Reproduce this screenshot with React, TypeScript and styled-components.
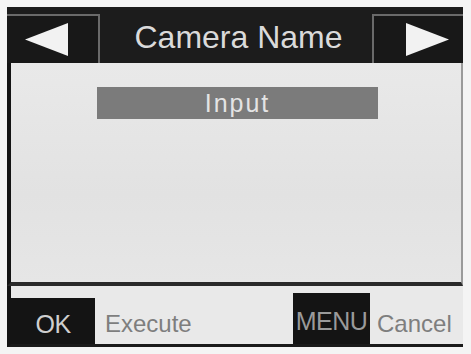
import React from "react";
import styled, { createGlobalStyle } from "styled-components";

const GlobalStyle = createGlobalStyle`
  html, body {
    margin: 0;
    padding: 0;
    background: #f4f4f4;
    font-family: "Liberation Sans", Arial, sans-serif;
  }
`;

const Screen = styled.div`
  margin: 7px 0 0 7px;
  width: 456px;
  height: 340px;
  display: flex;
  flex-direction: column;
  background: #1a1a1a;
`;

const Header = styled.div`
  height: 56px;
  display: flex;
  background: #1c1c1c;
`;

const ArrowBox = styled.div<{ side: "left" | "right" }>`
  width: ${(p) => (p.side === "left" ? 93 : 91)}px;
  margin-top: 7px;
  display: flex;
  align-items: center;
  justify-content: flex-start;
  box-sizing: border-box;
  border-top: 2px solid #6a6a6a;
  ${(p) =>
    p.side === "left"
      ? "border-right: 2px solid #6a6a6a; padding-left: 18px;"
      : "border-left: 2px solid #6a6a6a; padding-left: 31px;"}
  background: #181818;
`;

const Title = styled.div`
  flex: 1;
  display: flex;
  align-items: center;
  justify-content: center;
  color: #dadada;
  font-size: 32px;
  padding: 4px 0 0 5px;
`;

const Content = styled.div`
  flex: 1;
  background: linear-gradient(180deg, #e9e9e9 0%, #e2e2e2 60%, #e6e6e6 100%);
  border-left: 4px solid #141414;
  border-right: 2px solid #9a9a9a;
  border-bottom: 4px solid #2a2a2a;
  padding-top: 24px;
`;

const InputBar = styled.div`
  margin-left: 86px;
  width: 281px;
  height: 32px;
  background: #7b7b7b;
  color: #e4e4e4;
  font-size: 25px;
  letter-spacing: 2px;
  display: flex;
  align-items: center;
  justify-content: center;
`;

const Footer = styled.div`
  height: 58px;
  display: flex;
  align-items: flex-end;
  background: #e9e9e9;
  border-left: 4px solid #141414;
  border-bottom: 3px solid #1a1a1a;
`;

const Key = styled.div<{ w: number; h: number; color: string }>`
  width: ${(p) => p.w}px;
  height: ${(p) => p.h}px;
  background: #141414;
  color: ${(p) => p.color};
  font-size: 25px;
  letter-spacing: -0.5px;
  display: flex;
  align-items: center;
  justify-content: center;
  padding-top: 6px;
  box-sizing: border-box;
`;

const Label = styled.div<{ grow?: boolean }>`
  ${(p) => (p.grow ? "flex: 1;" : "width: 93px;")}
  height: 46px;
  display: flex;
  align-items: center;
  padding: 6px 0 0 ${(p) => (p.grow ? 10 : 7)}px;
  box-sizing: border-box;
  color: #7e7e7e;
  font-size: 24px;
`;

const Arrow = ({ dir }: { dir: "left" | "right" }) => (
  <svg width="44" height="33" viewBox="0 0 44 33">
    {dir === "left" ? (
      <polygon points="0,16.5 43,0 43,33" fill="#f2f2f2" />
    ) : (
      <polygon points="44,16.5 1,0 1,33" fill="#f2f2f2" />
    )}
  </svg>
);

export default function App() {
  return (
    <>
      <GlobalStyle />
      <Screen>
        <Header>
          <ArrowBox side="left">
            <Arrow dir="left" />
          </ArrowBox>
          <Title>Camera Name</Title>
          <ArrowBox side="right">
            <Arrow dir="right" />
          </ArrowBox>
        </Header>
        <Content>
          <InputBar>Input</InputBar>
        </Content>
        <Footer>
          <Key w={84} h={46} color="#cfcfcf">
            OK
          </Key>
          <Label grow>Execute</Label>
          <Key w={77} h={51} color="#9a9a9a">
            MENU
          </Key>
          <Label>Cancel</Label>
        </Footer>
      </Screen>
    </>
  );
}
